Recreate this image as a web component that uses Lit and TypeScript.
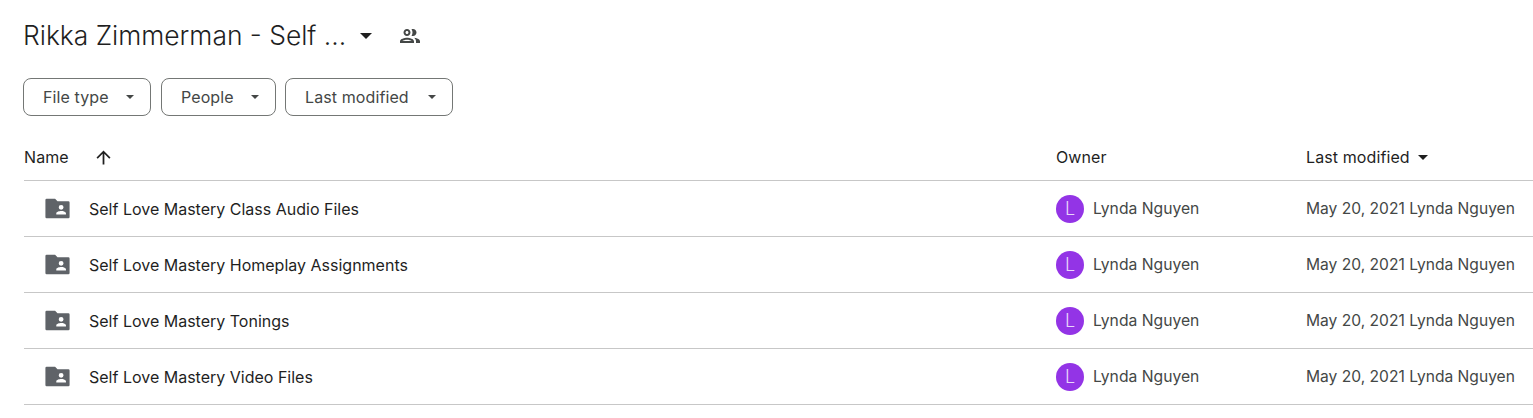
import { LitElement, html, css } from "lit";
import { customElement } from "lit/decorators.js";

const caret = html`<svg class="caret" viewBox="0 0 10 5"><path d="M0 0h10L5 5z" fill="currentColor"/></svg>`;
const rows = [
  "Self Love Mastery Class Audio Files",
  "Self Love Mastery Homeplay Assignments",
  "Self Love Mastery Tonings",
  "Self Love Mastery Video Files",
];

@customElement("app-root")
export class AppRoot extends LitElement {
  static styles = css`
    :host { display: block; width: 1533px; height: 418px; overflow: hidden; background: #fff; font-family: Inter, Roboto, sans-serif; color: #1f1f1f; }
    .title { display: flex; align-items: center; height: 36px; margin: 18px 0 0 23px; }
    h1 { margin: 0; padding-bottom: 2px; font: 300 26.4px/34px Inter, Roboto, sans-serif; width: 337px; white-space: nowrap; }
    .title .caret { width: 12px; height: 6px; color: #1f1f1f; }
    .people { width: 24px; height: 24px; margin-left: 26px; color: #444746; }
    .filters { display: flex; gap: 10px; margin: 24px 0 0 23px; }
    .chip { box-sizing: border-box; height: 38px; display: flex; align-items: center; justify-content: space-between; border: 1px solid #747775; border-radius: 8px; padding: 0 16px 0 19px; font-size: 16px; letter-spacing: 0.1px; color: #444746; }
    .chip:nth-child(1) { width: 128px; }
    .chip:nth-child(2) { width: 115px; }
    .chip:nth-child(3) { width: 168px; margin-left: -1px; }
    .chip .caret { width: 8px; height: 4px; }
    .table { margin: 22px 0 0 24px; }
    .row { display: grid; grid-template-columns: 1032px 250px 1fr; align-items: center; border-bottom: 1px solid #c7c7c7; box-sizing: border-box; }
    .head { height: 43px; font-size: 16px; letter-spacing: 0.1px; padding-bottom: 4px; }
    .head .namecol { display: flex; align-items: center; }
    .arrow { width: 21px; height: 21px; margin-left: 24px; }
    .sort { display: flex; align-items: center; }
    .sort .caret { width: 10px; height: 5px; margin-left: 8px; }
    .item { height: 56px; font-size: 15.7px; }
    .cell { display: flex; align-items: center; }
    .folder { width: 29px; height: 29px; margin: 0 17px 0 19px; color: #5f6368; }
    .name { color: #1f1f1f; font-size: 16px; }
    .avatar { width: 28px; height: 28px; border-radius: 50%; background: #9334e6; color: #e8d5fa; display: flex; align-items: center; justify-content: center; font-size: 18px; font-weight: 300; margin-right: 9px; }
    .muted { color: #444746; white-space: nowrap; }
    .date { font-size: 15.6px; }
  `;
  render() {
    return html`
      <div class="title">
        <h1>Rikka Zimmerman - Self ...</h1>
        ${caret}
        <svg class="people" viewBox="0 0 24 24" fill="currentColor"><path d="M9 13.75c-2.34 0-7 1.17-7 3.5V19h14v-1.75c0-2.33-4.66-3.5-7-3.5zM4.34 17c.84-.58 2.87-1.25 4.66-1.25s3.82.67 4.66 1.25H4.34zM9 12c1.93 0 3.5-1.57 3.5-3.5S10.93 5 9 5 5.500 6.570 5.500 8.500 7.070 12 9 12zm0-5c.83 0 1.500.67 1.500 1.500S9.830 10 9 10s-1.500-.67-1.500-1.500S8.170 7 9 7zm7.040 6.810c1.160.84 1.960 1.960 1.960 3.440V19h4v-1.750c0-2.020-3.500-3.170-5.960-3.440zM15 12c1.930 0 3.500-1.570 3.500-3.500S16.930 5 15 5c-.54 0-1.040.13-1.500.35.630.890 1 1.980 1 3.150s-.37 2.260-1 3.150c.46.220.96.350 1.500.350z"/></svg>
      </div>
      <div class="filters">
        ${["File type", "People", "Last modified"].map((f) => html`<div class="chip">${f}${caret}</div>`)}
      </div>
      <div class="table">
        <div class="row head">
          <div class="namecol">Name<svg class="arrow" viewBox="0 0 24 24" fill="currentColor"><path d="M4 12l1.410 1.410L11 7.830V20h2V7.830l5.580 5.590L20 12l-8-8-8 8z"/></svg></div>
          <div>Owner</div>
          <div class="sort">Last modified${caret}</div>
        </div>
        ${rows.map((r) => html`
          <div class="row item">
            <div class="cell">
              <svg class="folder" viewBox="0 0 24 24" fill="currentColor"><path fill-rule="evenodd" d="M21 6h-9l-2-2H3a1 1 0 0 0-1 1v14a1 1 0 0 0 1 1h18a1 1 0 0 0 1-1V7a1 1 0 0 0-1-1zm-6 3a2 2 0 1 1 0 4 2 2 0 0 1 0-4zm4 8h-8v-1c0-1.330 2.670-2 4-2s4 .67 4 2v1z"/></svg>
              <span class="name">${r}</span>
            </div>
            <div class="cell"><span class="avatar">L</span><span class="muted">Lynda Nguyen</span></div>
            <div class="cell muted date">May 20, 2021 Lynda Nguyen</div>
          </div>`)}
      </div>
    `;
  }
}
